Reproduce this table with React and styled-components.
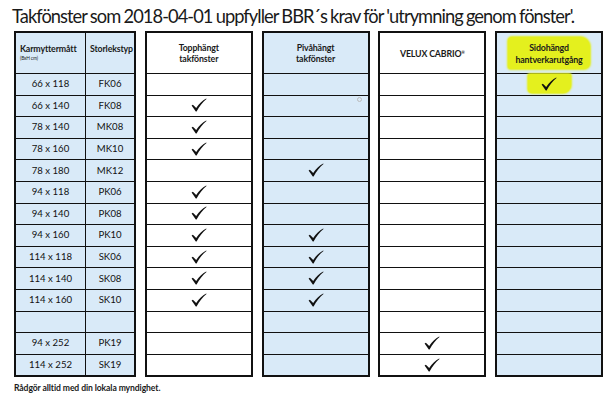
import React from "react";
import styled, { createGlobalStyle } from "styled-components";

const GlobalStyles = createGlobalStyle`
	html, body {
		margin: 0;
		padding: 0;
		background: #ffffff;
	}
	body {
		font-family: Lato, "Liberation Sans", Arial, sans-serif;
		color: #111111;
	}
`;

const BLUE = "#d9eaf8";
const YELLOW = "#e4f01e";

const rows = [
	{ size: "66 x 118", type: "FK06", checks: [0, 0, 0, 1] },
	{ size: "66 x 140", type: "FK08", checks: [1, 0, 0, 0] },
	{ size: "78 x 140", type: "MK08", checks: [1, 0, 0, 0] },
	{ size: "78 x 160", type: "MK10", checks: [1, 0, 0, 0] },
	{ size: "78 x 180", type: "MK12", checks: [0, 1, 0, 0] },
	{ size: "94 x 118", type: "PK06", checks: [1, 0, 0, 0] },
	{ size: "94 x 140", type: "PK08", checks: [1, 0, 0, 0] },
	{ size: "94 x 160", type: "PK10", checks: [1, 1, 0, 0] },
	{ size: "114 x 118", type: "SK06", checks: [1, 1, 0, 0] },
	{ size: "114 x 140", type: "SK08", checks: [1, 1, 0, 0] },
	{ size: "114 x 160", type: "SK10", checks: [1, 1, 0, 0] },
	{ size: "", type: "", checks: [0, 0, 0, 0] },
	{ size: "94 x 252", type: "PK19", checks: [0, 0, 1, 0] },
	{ size: "114 x 252", type: "SK19", checks: [0, 0, 1, 0] },
];

const Page = styled.div`
	width: 614px;
	height: 404px;
	padding: 4px 0 0 12px;
	box-sizing: border-box;
`;

const Title = styled.h1`
	margin: 0;
	height: 27px;
	font-family: Lato, "Liberation Sans", Arial, sans-serif;
	font-weight: 400;
	font-size: 18.3px;
	letter-spacing: -0.95px;
	word-spacing: -0.5px;
	line-height: 24px;
	color: #1a1a1a;
	white-space: nowrap;
`;

const TableRow = styled.div`
	display: flex;
	gap: 8.75px;
	margin-left: 2px;
`;

const Block = styled.div`
	display: flex;
	width: ${({ $w }) => $w}px;
	box-sizing: border-box;
	border: 2px solid #111;
	background: ${({ $bg }) => $bg};
`;

const Column = styled.div`
	flex: ${({ $w }) => ($w ? `0 0 ${$w}px` : "1")};
	min-width: 0;
	display: flex;
	flex-direction: column;
	border-left: ${({ $divider }) => ($divider ? "1.5px solid #111" : "none")};
`;

const HeaderCell = styled.div`
	height: 40px;
	display: flex;
	flex-direction: column;
	align-items: ${({ $left }) => ($left ? "flex-start" : "center")};
	justify-content: ${({ $left }) => ($left ? "flex-start" : "center")};
	padding: ${({ $left }) => ($left ? "10px 0 0 4px" : "0")};
	text-align: center;
	font-size: 8.8px;
	font-weight: 700;
	letter-spacing: -0.15px;
	line-height: 11.5px;
	color: #1a1a1a;
	box-sizing: border-box;
	white-space: nowrap;
`;

const Sub = styled.span`
	font-size: 4.8px;
	line-height: 7px;
	font-weight: 400;
`;

const Sup = styled.sup`
	font-size: 4px;
	vertical-align: 3px;
`;

const Cell = styled.div`
	position: relative;
	height: 21.6px;
	box-sizing: border-box;
	border-top: 1.5px solid #111;
	display: flex;
	align-items: center;
	justify-content: center;
	font-size: 9.6px;
	font-weight: 400;
	color: #111;
	padding-bottom: 1px;
`;

const Highlight = styled.span`
	display: inline-flex;
	flex-direction: column;
	align-items: center;
	justify-content: center;
	background: ${YELLOW};
	border-radius: 4px 10px 6px 3px;
	padding: ${({ $pad }) => $pad};
	box-shadow: 0 0 2px 1px ${YELLOW};
`;

const CheckHighlight = styled(Highlight)`
	position: absolute;
	left: 31px;
	top: 0;
	width: 43px;
	height: 19px;
	border-radius: 2px 2px 8px 4px;
`;

const Dot = styled.span`
	position: absolute;
	right: 6px;
	top: 1px;
	width: 3px;
	height: 3px;
	border: 1px solid #bbb;
	border-radius: 50%;
`;

const Footer = styled.p`
	margin: 6px 0 0 2px;
	font-size: 8.6px;
	font-weight: 700;
	letter-spacing: -0.1px;
	color: #1a1a1a;
`;

const CheckWrap = styled.span`
	position: relative;
	display: flex;
`;

const Check = () => (
	<svg width="16" height="14" viewBox="0 0 16 14">
		<path
			d="M0.6 7.6 L1.9 6.7 L5.2 9.9 C8 5.6 11.2 2.6 15.2 0.4 L15.5 0.9 C11.7 3.8 8.4 8.2 5.6 13.4 L4.8 13.4 Z"
			fill="#111"
		/>
	</svg>
);

const CheckColumn = ({ index, header, bg, highlight }) => (
	<Block $w={108} $bg={bg}>
		<Column>
			<HeaderCell>
				{highlight ? <Highlight $pad="5px 7px 4px 7px">{header}</Highlight> : header}
			</HeaderCell>
			{rows.map((r, i) => (
				<Cell key={i}>
					{highlight && i === 0 && <CheckHighlight />}
					{index === 1 && i === 1 && <Dot />}
					{r.checks[index] ? (
						<CheckWrap>
							<Check />
						</CheckWrap>
					) : null}
				</Cell>
			))}
		</Column>
	</Block>
);

export default function App() {
	return (
		<>
			<GlobalStyles />
			<Page>
				<Title>
					Takfönster som 2018-04-01 uppfyller BBR´s krav för 'utrymning genom fönster'.
				</Title>
				<TableRow>
					<Block $w={122} $bg={BLUE}>
						<Column $w={69}>
							<HeaderCell $left>
								<span>Karmyttermått</span>
								<Sub>(BxH cm)</Sub>
							</HeaderCell>
							{rows.map((r, i) => (
								<Cell key={i}>{r.size}</Cell>
							))}
						</Column>
						<Column $divider>
							<HeaderCell $left>Storlekstyp</HeaderCell>
							{rows.map((r, i) => (
								<Cell key={i}>{r.type}</Cell>
							))}
						</Column>
					</Block>
					<CheckColumn
						index={0}
						bg="#ffffff"
						header={
							<>
								<span>Topphängt</span>
								<span>takfönster</span>
							</>
						}
					/>
					<CheckColumn
						index={1}
						bg={BLUE}
						header={
							<>
								<span>Pivåhängt</span>
								<span>takfönster</span>
							</>
						}
					/>
					<CheckColumn
						index={2}
						bg="#ffffff"
						header={
							<span>
								VELUX CABRIO<Sup>®</Sup>
							</span>
						}
					/>
					<CheckColumn
						index={3}
						bg={BLUE}
						highlight
						header={
							<>
								<span>Sidohängd</span>
								<span>hantverkarutgång</span>
							</>
						}
					/>
				</TableRow>
				<Footer>Rådgör alltid med din lokala myndighet.</Footer>
			</Page>
		</>
	);
}
